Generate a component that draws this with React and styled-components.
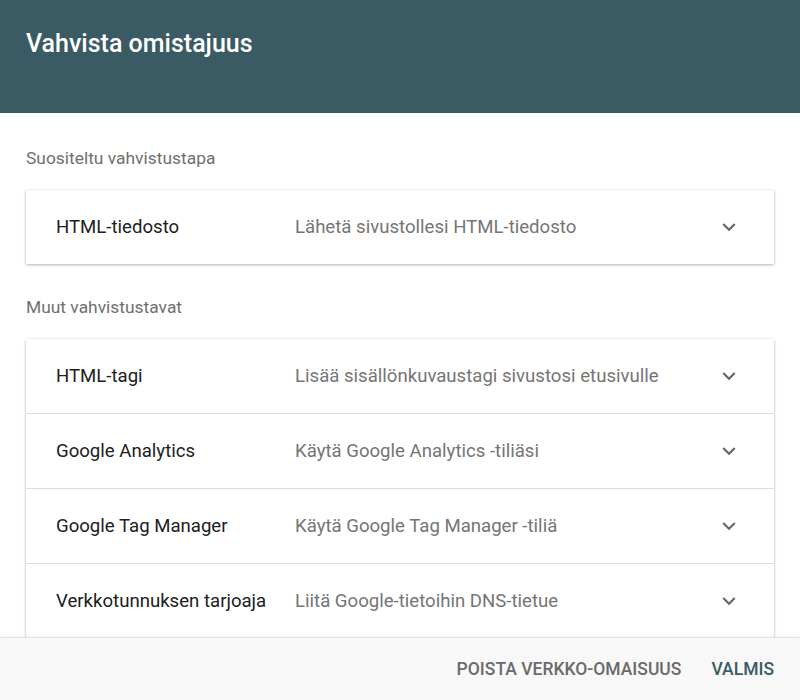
import React from 'react';
import styled, { createGlobalStyle } from 'styled-components';

const GlobalStyle = createGlobalStyle`
  html, body {
    margin: 0;
    padding: 0;
    background: #fff;
  }
  body {
    font-family: Roboto, "Noto Sans", Arial, sans-serif;
  }
`;

const Dialog = styled.div`
  width: 800px;
  height: 700px;
  display: flex;
  flex-direction: column;
  overflow: hidden;
  background: #fff;
`;

const Header = styled.header`
  height: 113px;
  flex-shrink: 0;
  background: #3a5a64;
  box-sizing: border-box;
  padding: 29px 26px 0;
`;

const Title = styled.h1`
  margin: 0;
  color: #fff;
  font-size: 25px;
  font-weight: 500;
  line-height: 30px;
`;

const Body = styled.div`
  flex: 1;
  overflow: hidden;
  padding: 0 26px;
`;

const SectionLabel = styled.div`
  color: #6f6f6f;
  font-size: 17.4px;
  line-height: 20px;
  padding: ${(p) => (p.first ? '35px 0 22px' : '33px 0 22px')};
`;

const Card = styled.div`
  background: #fff;
  box-shadow: 0 1px 3px rgba(0, 0, 0, 0.28), 0 0 1px rgba(0, 0, 0, 0.12);
`;

const Row = styled.div`
  display: flex;
  align-items: center;
  height: 74px;
  padding: 0 30px;
  border-top: ${(p) => (p.divided ? '1px solid #dedede' : 'none')};
`;

const Name = styled.div`
  width: 239px;
  flex-shrink: 0;
  color: #202020;
  font-size: 18.6px;
`;

const Desc = styled.div`
  flex: 1;
  color: #757575;
  font-size: 18.6px;
`;

const Chevron = styled.svg`
  width: 26px;
  height: 26px;
  margin-right: 2px;
  fill: #666;
`;

const Footer = styled.footer`
  height: 62px;
  flex-shrink: 0;
  background: #f8f8f8;
  border-top: 1px solid #e2e2e2;
  box-shadow: 0 -1px 2px rgba(0, 0, 0, 0.05);
  display: flex;
  align-items: center;
  justify-content: flex-end;
  gap: 30px;
  padding: 0 26px;
  position: relative;
`;

const TextButton = styled.button`
  background: none;
  border: none;
  padding: 0;
  font-family: inherit;
  font-size: 17.5px;
  font-weight: 500;
  text-transform: uppercase;
  color: ${(p) => (p.primary ? '#3a5a64' : '#6a6a6a')};
  cursor: pointer;
`;

const ExpandIcon = () => (
  <Chevron viewBox="0 0 24 24">
    <path d="M16.59 8.59L12 13.17 7.41 8.59 6 10l6 6 6-6z" />
  </Chevron>
);

const others = [
  ['HTML-tagi', 'Lisää sisällönkuvaustagi sivustosi etusivulle'],
  ['Google Analytics', 'Käytä Google Analytics -tiliäsi'],
  ['Google Tag Manager', 'Käytä Google Tag Manager -tiliä'],
  ['Verkkotunnuksen tarjoaja', 'Liitä Google-tietoihin DNS-tietue'],
];

export default function App() {
  return (
    <Dialog>
      <GlobalStyle />
      <Header>
        <Title>Vahvista omistajuus</Title>
      </Header>
      <Body>
        <SectionLabel first>Suositeltu vahvistustapa</SectionLabel>
        <Card>
          <Row>
            <Name>HTML-tiedosto</Name>
            <Desc>Lähetä sivustollesi HTML-tiedosto</Desc>
            <ExpandIcon />
          </Row>
        </Card>
        <SectionLabel>Muut vahvistustavat</SectionLabel>
        <Card>
          {others.map(([name, desc], i) => (
            <Row key={name} divided={i > 0}>
              <Name>{name}</Name>
              <Desc>{desc}</Desc>
              <ExpandIcon />
            </Row>
          ))}
        </Card>
      </Body>
      <Footer>
        <TextButton>Poista verkko-omaisuus</TextButton>
        <TextButton primary>Valmis</TextButton>
      </Footer>
    </Dialog>
  );
}
